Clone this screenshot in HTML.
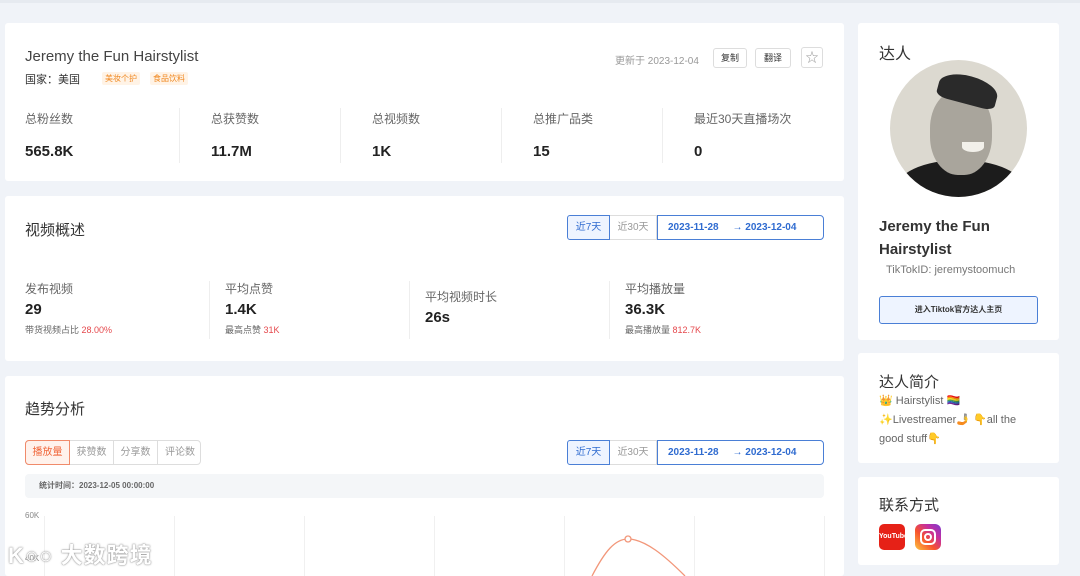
<!DOCTYPE html>
<html><head><meta charset="utf-8"><style>
*{margin:0;padding:0;box-sizing:border-box}
body{width:1080px;height:573px;overflow:hidden;background:#f0f3f8;font-family:"Liberation Sans","Noto Sans CJK SC",sans-serif;color:#333;position:relative}
.card{position:absolute;background:#fff;border-radius:3px}
.a{position:absolute;white-space:nowrap}
.lab{font-size:12px;color:#666}
.val{font-size:15px;font-weight:bold;color:#222}
.sep{position:absolute;width:1px;background:#eee}
.btn{position:absolute;border:1px solid #ddd;border-radius:3px;font-size:9px;text-align:center;color:#333;background:#fff}
.tag{position:absolute;background:#fff3e6;color:#f08a24;font-size:8px;padding:1px 3px;border-radius:2px}
.range{position:absolute;height:25px;font-size:10px}
.range div{position:absolute;top:0;height:25px;line-height:23px;text-align:center}
.red{color:#e5494d}
</style></head><body>
<div style="position:absolute;left:0;top:0;width:1080px;height:3px;background:#e6eaf0"></div>

<div class="card" style="left:5px;top:23px;width:839px;height:158px">
 <div class="a" style="left:20px;top:25px;font-size:15px;color:#444">Jeremy the Fun Hairstylist</div>
 <div class="a" style="left:20px;top:48px;font-size:11px;color:#333">国家：美国</div>
 <div class="tag" style="left:97px;top:49px">美妆个护</div>
 <div class="tag" style="left:145px;top:49px">食品饮料</div>
 <div class="a" style="left:610px;top:29px;font-size:10px;color:#999">更新于 2023-12-04</div>
 <div class="btn" style="left:708px;top:25px;width:34px;height:20px;line-height:18px">复制</div>
 <div class="btn" style="left:750px;top:25px;width:36px;height:20px;line-height:18px">翻译</div>
 <div class="btn" style="left:796px;top:24px;width:22px;height:21px;line-height:19px;font-size:13px;color:#999">☆</div>
 <div class="a lab" style="left:20px;top:87px">总粉丝数</div><div class="a val" style="left:20px;top:120px">565.8K</div>
 <div class="sep" style="left:174px;top:85px;height:55px"></div>
 <div class="a lab" style="left:206px;top:87px">总获赞数</div><div class="a val" style="left:206px;top:120px">11.7M</div>
 <div class="sep" style="left:335px;top:85px;height:55px"></div>
 <div class="a lab" style="left:367px;top:87px">总视频数</div><div class="a val" style="left:367px;top:120px">1K</div>
 <div class="sep" style="left:496px;top:85px;height:55px"></div>
 <div class="a lab" style="left:528px;top:87px">总推广品类</div><div class="a val" style="left:528px;top:120px">15</div>
 <div class="sep" style="left:657px;top:85px;height:55px"></div>
 <div class="a lab" style="left:689px;top:87px">最近30天直播场次</div><div class="a val" style="left:689px;top:120px">0</div>
</div>

<div class="card" style="left:5px;top:196px;width:839px;height:165px">
 <div class="a" style="left:20px;top:23px;font-size:15px;color:#333">视频概述</div>
 <div class="range" style="left:562px;top:19px;width:257px">
  <div style="left:0;width:43px;border:1px solid #4a7fd6;border-radius:3px 0 0 3px;color:#2f6bd0;background:#eef4ff">近7天</div>
  <div style="left:43px;width:47px;border:1px solid #ddd;border-left:0;color:#999">近30天</div>
  <div style="left:90px;width:167px;border:1px solid #4a7fd6;border-radius:0 4px 4px 0;color:#2f6bd0;font-weight:bold;text-align:left;padding-left:10px">2023-11-28 &nbsp;&nbsp;&nbsp;&nbsp;→ 2023-12-04</div>
 </div>
 <div class="a lab" style="left:20px;top:84px">发布视频</div><div class="a val" style="left:20px;top:105px">29</div>
 <div class="a" style="left:20px;top:127px;font-size:9px;color:#666">带货视频占比 <span class="red">28.00%</span></div>
 <div class="sep" style="left:204px;top:85px;height:58px"></div>
 <div class="a lab" style="left:220px;top:84px">平均点赞</div><div class="a val" style="left:220px;top:105px">1.4K</div>
 <div class="a" style="left:220px;top:127px;font-size:9px;color:#666">最高点赞 <span class="red">31K</span></div>
 <div class="sep" style="left:404px;top:85px;height:58px"></div>
 <div class="a lab" style="left:420px;top:92px">平均视频时长</div><div class="a val" style="left:420px;top:113px">26s</div>
 <div class="sep" style="left:604px;top:85px;height:58px"></div>
 <div class="a lab" style="left:620px;top:84px">平均播放量</div><div class="a val" style="left:620px;top:105px">36.3K</div>
 <div class="a" style="left:620px;top:127px;font-size:9px;color:#666">最高播放量 <span class="red">812.7K</span></div>
</div>

<div class="card" style="left:5px;top:376px;width:839px;height:200px">
 <div class="a" style="left:20px;top:22px;font-size:15px;color:#333">趋势分析</div>
 <div style="position:absolute;left:20px;top:64px;width:176px;height:25px;border:1px solid #ddd;border-radius:4px;font-size:10px;color:#999">
  <div style="position:absolute;left:-1px;top:-1px;width:45px;height:25px;border:1px solid #f08a6a;border-radius:4px 0 0 4px;background:#fff2ec;color:#f0663a;text-align:center;line-height:23px">播放量</div>
  <div style="position:absolute;left:44px;top:0;width:44px;height:23px;border-right:1px solid #ddd;text-align:center;line-height:23px">获赞数</div>
  <div style="position:absolute;left:88px;top:0;width:44px;height:23px;border-right:1px solid #ddd;text-align:center;line-height:23px">分享数</div>
  <div style="position:absolute;left:132px;top:0;width:44px;height:23px;text-align:center;line-height:23px">评论数</div>
 </div>
 <div class="range" style="left:562px;top:64px;width:257px">
  <div style="left:0;width:43px;border:1px solid #4a7fd6;border-radius:3px 0 0 3px;color:#2f6bd0;background:#eef4ff">近7天</div>
  <div style="left:43px;width:47px;border:1px solid #ddd;border-left:0;color:#999">近30天</div>
  <div style="left:90px;width:167px;border:1px solid #4a7fd6;border-radius:0 4px 4px 0;color:#2f6bd0;font-weight:bold;text-align:left;padding-left:10px">2023-11-28 &nbsp;&nbsp;&nbsp;&nbsp;→ 2023-12-04</div>
 </div>
 <div style="position:absolute;left:20px;top:98px;width:799px;height:24px;background:#f4f6f8;border-radius:4px;font-size:8px;color:#666;font-weight:bold;line-height:24px;padding-left:14px">统计时间：2023-12-05 00:00:00</div>
 <div class="a" style="left:20px;top:135px;font-size:8px;color:#888">60K</div>
 <div class="a" style="left:20px;top:178px;font-size:8px;color:#888">40K</div>
 <svg style="position:absolute;left:0;top:0" width="839" height="200">
  <g stroke="#f0f0f0" stroke-width="1">
   <line x1="39.5" y1="140" x2="39.5" y2="200"/><line x1="169.5" y1="140" x2="169.5" y2="200"/>
   <line x1="299.5" y1="140" x2="299.5" y2="200"/><line x1="429.5" y1="140" x2="429.5" y2="200"/>
   <line x1="559.5" y1="140" x2="559.5" y2="200"/><line x1="689.5" y1="140" x2="689.5" y2="200"/>
   <line x1="819.5" y1="140" x2="819.5" y2="200"/>
  </g>
  <path d="M587 200 C600 175 610 163 623 163 C640 163 660 180 680 200" fill="none" stroke="#f2977a" stroke-width="1.3"/>
  <circle cx="623" cy="163" r="3" fill="#fff" stroke="#f2977a" stroke-width="1.3"/>
 </svg>
</div>
<div class="a" style="left:8px;top:538px;font-size:22px;color:#fff;font-weight:bold;text-shadow:0 0 2px #999,0 0 1px #777;letter-spacing:1px">K○○ 大数跨境</div>

<div class="card" style="left:858px;top:23px;width:201px;height:317px">
 <div class="a" style="left:21px;top:17px;font-size:16px;color:#333">达人</div>
 <div style="position:absolute;left:32px;top:37px;width:137px;height:137px;border-radius:50%;background:#dcd9d0;overflow:hidden">
  <div style="position:absolute;left:5px;top:100px;width:130px;height:60px;background:#1c1c1c;border-radius:50% 50% 0 0"></div>
  <div style="position:absolute;left:40px;top:30px;width:62px;height:85px;background:#a9a59c;border-radius:45%"></div>
  <div style="position:absolute;left:72px;top:82px;width:22px;height:10px;background:#f2f0ea;border-radius:0 0 50% 50%"></div>
  <div style="position:absolute;left:48px;top:16px;width:60px;height:28px;background:#2a2a2a;border-radius:50% 50% 20% 20%;transform:rotate(15deg)"></div>
 </div>
 <div class="a" style="left:21px;top:192px;font-size:15px;color:#333;line-height:23px;font-weight:bold">Jeremy the Fun<br>Hairstylist</div>
 <div class="a" style="left:28px;top:241px;font-size:11px;color:#777">TikTokID: jeremystoomuch</div>
 <div style="position:absolute;left:21px;top:273px;width:159px;height:28px;border:1px solid #4a7fd6;border-radius:3px;background:#eef4ff;font-size:8px;font-weight:bold;text-align:center;line-height:26px;color:#333">进入Tiktok官方达人主页</div>
</div>

<div class="card" style="left:858px;top:353px;width:201px;height:110px">
 <div class="a" style="left:21px;top:18px;font-size:15px;color:#333">达人简介</div>
 <div class="a" style="left:21px;top:39px;font-size:11px;color:#666;line-height:19px">👑 Hairstylist 🏳️‍🌈<br>✨Livestreamer🤳 👇all the<br>good stuff👇</div>
</div>

<div class="card" style="left:858px;top:477px;width:201px;height:88px">
 <div class="a" style="left:21px;top:17px;font-size:15px;color:#333">联系方式</div>
 <div style="position:absolute;left:21px;top:47px;width:26px;height:26px;border-radius:5px;background:#e62117;color:#fff;font-size:7px;font-weight:bold;text-align:center;line-height:26px">YouTube</div>
 <div style="position:absolute;left:57px;top:47px;width:26px;height:26px;border-radius:6px;background:linear-gradient(45deg,#fdc43f,#f7522e 40%,#c42fa0 70%,#7a3ad0)">
  <div style="position:absolute;left:5px;top:5px;width:16px;height:16px;border:2px solid #fff;border-radius:5px"></div>
  <div style="position:absolute;left:9px;top:9px;width:8px;height:8px;border:2px solid #fff;border-radius:50%"></div>
 </div>
</div>
</body></html>
